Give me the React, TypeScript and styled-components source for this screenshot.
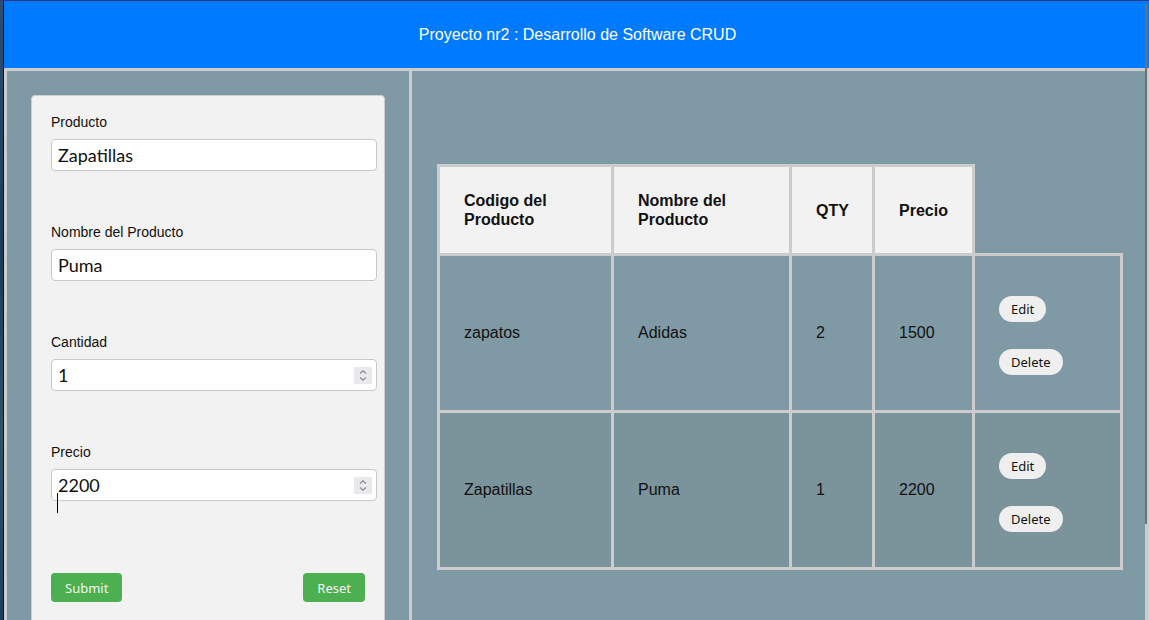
import React from "react";
import styled, { createGlobalStyle } from "styled-components";

const GlobalStyle = createGlobalStyle`
  html, body { margin: 0; padding: 0; }
  body {
    background: #223f5e;
    font-family: "Liberation Sans", Arial, sans-serif;
    overflow: hidden;
  }
  * { box-sizing: border-box; }
`;

const Desktop = styled.div`
  position: relative;
  display: flex;
  width: 1149px;
  height: 620px;
  overflow: hidden;
  border-top: 1px solid #2f3a86;
`;

const DesktopEdge = styled.div`
  width: 4px;
  flex: none;
  background: linear-gradient(180deg, #2a4f73 0%, #1d3b57 40%, #2b5566 70%, #1f3e5c 100%);
  border-right: 1px solid #0d141c;
`;

const Window = styled.div`
  flex: 1;
  display: flex;
  flex-direction: column;
  min-width: 0;
`;

const Header = styled.header`
  height: 67px;
  flex: none;
  background: #007bff;
  color: #ffffff;
  display: flex;
  align-items: center;
  justify-content: center;
  font-size: 16px;
  padding-left: 2px;
`;

const Main = styled.main`
  flex: 1;
  display: flex;
  border-top: 3px solid #cccccc;
  border-left: 3px solid #cccccc;
  min-height: 0;
`;

const LeftPanel = styled.section`
  width: 405px;
  flex: none;
  background: #7f9aa5;
  border-right: 3px solid #cccccc;
  padding: 24px 0 0 24px;
`;

const RightPanel = styled.section`
  flex: 1;
  background: #7f9aa5;
  border-right: 4px solid #cccccc;
  padding: 93px 0 0 25px;
`;

const Card = styled.form`
  width: 354px;
  height: 600px;
  background: #f2f2f2;
  border: 1px solid #cfcfcf;
  border-radius: 4px;
  padding: 18px 0 0 19px;
`;

const Field = styled.div`
  margin-bottom: 53px;
`;

const Label = styled.label`
  display: block;
  font-size: 14px;
  line-height: 17px;
  color: #111;
  margin-bottom: 8px;
`;

const InputWrap = styled.div`
  position: relative;
  width: 326px;
`;

const Input = styled.input`
  display: block;
  width: 326px;
  height: 32px;
  border: 1px solid #c8c8c8;
  border-radius: 4px;
  background: #ffffff;
  padding: 0 6px;
  font-family: "Lato", "Noto Sans", sans-serif;
  font-size: 18px;
  color: #111;
  outline: none;
`;

const Spin = styled.div`
  position: absolute;
  right: 5px;
  top: 8px;
  width: 18px;
  height: 17px;
  background: #e9e9ed;
  display: flex;
  align-items: center;
  justify-content: center;
`;

const IBeam = styled.div`
  position: absolute;
  left: 6px;
  top: 24px;
  width: 1px;
  height: 20px;
  background: #000;
`;

const ButtonRow = styled.div`
  display: flex;
  justify-content: space-between;
  width: 314px;
  margin-top: 72px;
`;

const FormButton = styled.button`
  height: 29px;
  padding: 0 14px;
  border: none;
  border-radius: 4px;
  background: #4caf50;
  color: #f4f4f4;
  font-family: "Noto Sans", sans-serif;
  font-size: 13px;
`;

const Table = styled.table`
  border-collapse: collapse;
  table-layout: fixed;
  width: 683px;
  font-family: "Liberation Sans", Arial, sans-serif;
  font-size: 16px;
  color: #111;
`;

const Th = styled.th`
  background: #f2f2f2;
  border: 3px solid #cccccc;
  padding: 24px 24px;
  line-height: 19px;
  text-align: left;
  font-weight: bold;
  vertical-align: middle;
`;

const Row = styled.tr<{ $alt?: boolean }>`
  background: ${(p) => (p.$alt ? "#7b939b" : "transparent")};
`;

const Td = styled.td`
  border: 3px solid #cccccc;
  padding: 0 24px;
  vertical-align: middle;
`;

const ActionTd = styled.td`
  border: 3px solid #cccccc;
  padding: 40px 24px 35px;
  vertical-align: middle;
`;

const Actions = styled.div`
  display: flex;
  flex-direction: column;
  align-items: flex-start;
  gap: 27px;
`;

const Pill = styled.button`
  height: 26px;
  padding: 0 12px;
  border: none;
  border-radius: 13px;
  background: #efefef;
  color: #111;
  font-family: "Noto Sans", sans-serif;
  font-size: 13px;
`;

const ScrollThumb = styled.div`
  position: absolute;
  left: 1145px;
  top: 3px;
  width: 2px;
  height: 520px;
  background: #707070;
`;

const SpinIcon = () => (
  <svg width="10" height="13" viewBox="0 0 10 13" fill="none" stroke="#8a8a8a" strokeWidth="1.1">
    <path d="M2 4.5 L5 1.8 L8 4.5" />
    <path d="M2 8.5 L5 11.2 L8 8.5" />
  </svg>
);

const rows = [
  { code: "zapatos", name: "Adidas", qty: 2, price: 1500 },
  { code: "Zapatillas", name: "Puma", qty: 1, price: 2200 },
];

export default function App() {
  return (
    <>
      <GlobalStyle />
      <Desktop>
        <DesktopEdge />
        <Window>
          <Header>Proyecto nr2 : Desarrollo de Software CRUD</Header>
          <Main>
            <LeftPanel>
              <Card onSubmit={(e) => e.preventDefault()}>
                <Field>
                  <Label>Producto</Label>
                  <InputWrap>
                    <Input type="text" defaultValue="Zapatillas" />
                  </InputWrap>
                </Field>
                <Field>
                  <Label>Nombre del Producto</Label>
                  <InputWrap>
                    <Input type="text" defaultValue="Puma" />
                  </InputWrap>
                </Field>
                <Field>
                  <Label>Cantidad</Label>
                  <InputWrap>
                    <Input type="text" defaultValue="1" />
                    <Spin><SpinIcon /></Spin>
                  </InputWrap>
                </Field>
                <Field>
                  <Label>Precio</Label>
                  <InputWrap>
                    <Input type="text" defaultValue="2200" />
                    <Spin><SpinIcon /></Spin>
                    <IBeam />
                  </InputWrap>
                </Field>
                <ButtonRow>
                  <FormButton type="submit">Submit</FormButton>
                  <FormButton type="button">Reset</FormButton>
                </ButtonRow>
              </Card>
            </LeftPanel>
            <RightPanel>
              <Table>
                <colgroup>
                  <col style={{ width: 174 }} />
                  <col style={{ width: 178 }} />
                  <col style={{ width: 83 }} />
                  <col style={{ width: 100 }} />
                  <col style={{ width: 148 }} />
                </colgroup>
                <thead>
                  <tr>
                    <Th>Codigo del Producto</Th>
                    <Th>Nombre del Producto</Th>
                    <Th>QTY</Th>
                    <Th>Precio</Th>
                  </tr>
                </thead>
                <tbody>
                  {rows.map((r, i) => (
                    <Row key={i} $alt={i % 2 === 1}>
                      <Td>{r.code}</Td>
                      <Td>{r.name}</Td>
                      <Td>{r.qty}</Td>
                      <Td>{r.price}</Td>
                      <ActionTd>
                        <Actions>
                          <Pill type="button">Edit</Pill>
                          <Pill type="button">Delete</Pill>
                        </Actions>
                      </ActionTd>
                    </Row>
                  ))}
                </tbody>
              </Table>
            </RightPanel>
          </Main>
        </Window>
        <ScrollThumb />
      </Desktop>
    </>
  );
}
